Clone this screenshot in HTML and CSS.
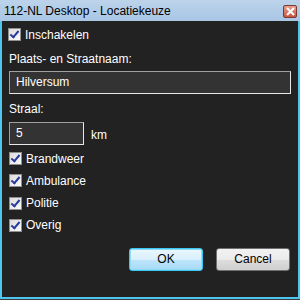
FILE: index.html
```html
<!DOCTYPE html>
<html lang="nl">
  <head>
    <meta charset="utf-8">
    <title>112-NL Desktop - Locatiekeuze</title>
    <link rel="stylesheet" href="styles.css">
  </head>
  <body>
    <div class="window">
      <div class="titlebar">
        <span class="title">112-NL Desktop - Locatiekeuze</span>
        <span class="close">
          <svg width="9" height="9" viewBox="0 0 9 9"><path d="M1 1L8 8M8 1L1 8" stroke="#fff" stroke-width="2"/></svg>
        </span>
      </div>
      <div class="content">
        <label class="check first"><span class="box"></span>Inschakelen</label>
        <div class="label">Plaats- en Straatnaam:</div>
        <div class="field wide">Hilversum</div>
        <div class="label straal">Straal:</div>
        <div class="row">
          <div class="field small">5</div>
          <span class="unit">km</span>
        </div>
        <div class="checks">
          <label class="check"><span class="box"></span>Brandweer</label>
          <label class="check"><span class="box"></span>Ambulance</label>
          <label class="check"><span class="box"></span>Politie</label>
          <label class="check"><span class="box"></span>Overig</label>
        </div>
        <div class="buttons">
          <button class="btn ok">OK</button>
          <button class="btn">Cancel</button>
        </div>
      </div>
    </div>
  </body>
</html>
```
FILE: styles.css
```css
html, body {
  margin: 0;
  background: #3a3a3a;
}

body {
  width: 300px;
  height: 300px;
  font-family: "Liberation Sans", Arial, sans-serif;
  font-size: 12px;
}

.window {
  width: 300px;
  height: 299px;
  display: flex;
  flex-direction: column;
}

.titlebar {
  height: 21px;
  background: linear-gradient(#bcd3ea, #a9c6e5);
  display: flex;
  align-items: center;
  justify-content: space-between;
  padding: 0 3px 0 4px;
  color: #000;
}

.title {
  font-size: 12px;
}

.close {
  width: 14px;
  height: 13px;
  box-sizing: border-box;
  border: 1px solid #7a3a30;
  border-radius: 2px;
  background: linear-gradient(#e8a192, #c8543f);
  display: flex;
  align-items: center;
  justify-content: center;
  margin-top: 2px;
}

.close svg {
  display: block;
}

.content {
  flex: 1;
  background: #222;
  border: 2px solid #4dc5ef;
  border-top: 0;
  padding: 7px 7px 0 7px;
  color: #fff;
  display: flex;
  flex-direction: column;
}

.check {
  display: flex;
  align-items: center;
  height: 13px;
  gap: 4px;
}

.check.first {
  margin-left: -1px;
}

.box {
  width: 13px;
  height: 13px;
  box-sizing: border-box;
  border: 1px solid #8f8f8f;
  background: linear-gradient(135deg, #dcdcdc, #fafafa);
  position: relative;
}

.box::after {
  content: "";
  position: absolute;
  left: 3px;
  top: 0px;
  width: 3px;
  height: 7px;
  border: solid #2a3a9c;
  border-width: 0 2px 2px 0;
  transform: rotate(40deg);
}

.label {
  margin-top: 11px;
  line-height: 14px;
}

.label.straal {
  margin-top: 8px;
}

.field {
  box-sizing: border-box;
  height: 23px;
  background: #333;
  border: 1px solid #a0a0a0;
  border-right-color: #e8e8e8;
  border-bottom-color: #e8e8e8;
  padding: 0 6px;
  line-height: 21px;
}

.field.wide {
  margin-top: 5px;
  width: 282px;
}

.row {
  margin-top: 6px;
  display: flex;
  align-items: center;
  gap: 7px;
}

.field.small {
  width: 75px;
}

.unit {
  padding-top: 2px;
}

.checks {
  margin-top: 7px;
  display: flex;
  flex-direction: column;
  gap: 9.3px;
}

.buttons {
  margin-top: 16px;
  display: flex;
  justify-content: flex-end;
  gap: 13px;
  padding-right: 1px;
}

.btn {
  width: 74px;
  height: 23px;
  border: 1px solid #707070;
  border-radius: 3px;
  background: linear-gradient(#f2f2f2 0%, #ebebeb 50%, #dddddd 50%, #cfcfcf 100%);
  font-family: "Liberation Sans", Arial, sans-serif;
  font-size: 12px;
  color: #000;
  padding: 0;
}

.btn.ok {
  border-color: #3cc7f5;
  box-shadow: inset 0 0 0 1px #8fdcf5;
  background: linear-gradient(#eaf6fd 0%, #d9f0fc 50%, #bee6fd 50%, #a7d9f5 100%);
}
```
